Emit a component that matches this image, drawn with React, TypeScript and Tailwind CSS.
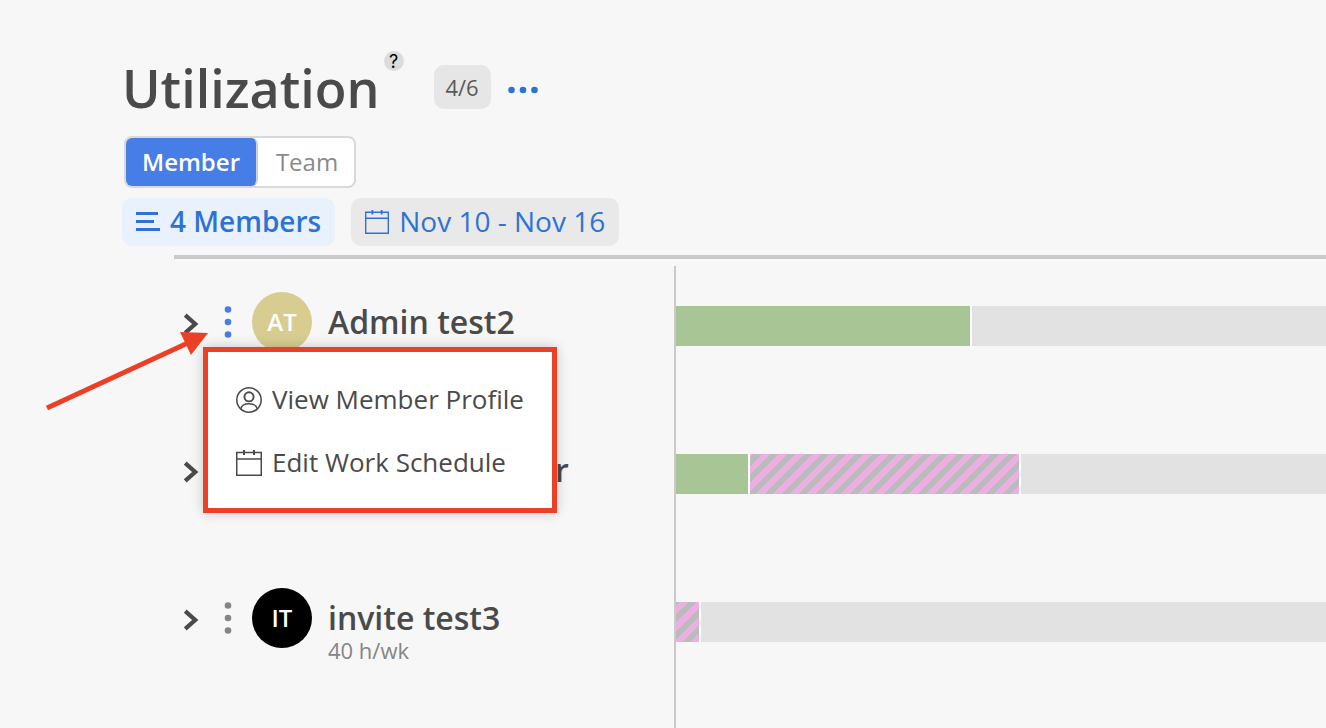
type Segment = { kind: "booked" | "timeOff"; amount: number };

type Member = {
  name: string;
  initials: string;
  avatar: string;
  capacity: string;
  segments: Segment[];
  menuOpen?: boolean;
};

const TRACK_TOTAL = 650;

const members: Member[] = [
  {
    name: "Admin test2",
    initials: "AT",
    avatar: "bg-[#d8cd91]",
    capacity: "40 h/wk",
    segments: [{ kind: "booked", amount: 296 }],
    menuOpen: true,
  },
  {
    name: "Admin member",
    initials: "AM",
    avatar: "bg-[#7aa5d8]",
    capacity: "40 h/wk",
    segments: [
      { kind: "booked", amount: 74 },
      { kind: "timeOff", amount: 271 },
    ],
  },
  {
    name: "invite test3",
    initials: "IT",
    avatar: "bg-black",
    capacity: "40 h/wk",
    segments: [{ kind: "timeOff", amount: 25 }],
  },
];

export default function App() {
  return (
    <main className="flex min-h-screen flex-col overflow-x-hidden bg-[#f7f7f7] font-['Open_Sans',sans-serif] text-[#4a4a4a]">
      <header className="px-[122px] pt-[51px]">
        <div className="flex h-[75px] items-start">
          <h1 className="text-[52px] leading-[74px] font-semibold">Utilization</h1>
          <button
            aria-label="Help"
            className="ml-1 flex size-5 items-center justify-center rounded-full bg-[#dcdcdc] pt-0.5 font-['Inter',sans-serif] text-[18px] leading-5 text-black"
          >
            ?
          </button>
          <span className="mt-3.5 ml-[30px] flex h-11 w-[57px] items-center justify-center rounded-[10px] bg-[#e6e6e6] text-[22px] text-[#5a5a5a]">
            4/6
          </span>
          <button aria-label="More options" className="mt-[34px] ml-4 text-[#2f72d6]">
            <svg width="32" height="10" viewBox="0 0 32 10" fill="currentColor">
              <circle cx="4.5" cy="5" r="3.3" />
              <circle cx="16" cy="5" r="3.3" />
              <circle cx="27.5" cy="5" r="3.3" />
            </svg>
          </button>
        </div>

        <div className="mt-2.5 ml-0.5 flex h-[52px] w-[232px] rounded-lg border-2 border-[#d9d9d9] bg-white text-2xl">
          <button className="w-[132px] rounded-md border-r-2 border-[#d0d0d0] bg-[#467de6] font-semibold text-white">
            Member
          </button>
          <button className="flex-1 pl-0.5 text-[#8a8a8a]">Team</button>
        </div>

        <div className="mt-2.5 flex gap-4 text-[28px] text-[#2f72d6]">
          <button className="flex h-12 items-center gap-2.5 rounded-[10px] bg-[#e9f2fc] px-3.5 pb-0.5 font-semibold">
            <svg width="24" height="20" viewBox="0 0 24 20" fill="currentColor">
              <path d="M0 1h22v3H0zM0 9h18v3H0zM0 17h24v3H0z" />
            </svg>
            4 Members
          </button>
          <button className="flex h-12 items-center gap-2.5 rounded-[10px] bg-[#e9e9e9] px-3.5 pb-0.5">
            <CalendarIcon className="mt-0.5 size-6" />
            Nov 10 - Nov 16
          </button>
        </div>
      </header>

      <div className="mt-[9px] ml-[174px] h-1 bg-[#cacaca]" />

      <section className="mt-[7px] flex flex-1">
        <ul className="w-[674px] shrink-0">
          {members.map((member) => (
            <MemberRow key={member.name} member={member} />
          ))}
        </ul>
        <div className="flex-1 border-l-2 border-[#cacaca]">
          {members.map((member) => (
            <div key={member.name} className="h-[148px] pt-10">
              <UtilizationBar segments={member.segments} />
            </div>
          ))}
        </div>
      </section>
    </main>
  );
}

function MemberRow({ member }: { member: Member }) {
  return (
    <li className="relative flex h-[148px] items-start pt-[26px] pl-[183px]">
      <button aria-label={`Expand ${member.name}`} className="mt-[21px]">
        <svg width="16" height="22" viewBox="0 0 16 22" fill="none" stroke="currentColor" strokeWidth="4.2">
          <path d="M2.2 2.2 12.2 11l-10 8.8" />
        </svg>
      </button>
      <button
        aria-label={`Options for ${member.name}`}
        className={member.menuOpen ? "mt-3 ml-6 text-[#467de6]" : "mt-3 ml-6 text-[#858585]"}
      >
        <svg width="10" height="36" viewBox="0 0 10 36" fill="currentColor">
          <circle cx="5" cy="5.5" r="3.3" />
          <circle cx="5" cy="18" r="3.3" />
          <circle cx="5" cy="30.5" r="3.3" />
        </svg>
      </button>
      <span
        className={`ml-[19px] flex size-[60px] items-center justify-center rounded-full text-2xl font-semibold text-white ${member.avatar}`}
      >
        {member.initials}
      </span>
      <div className="ml-4 pt-2.5 whitespace-nowrap">
        <h2 className="text-[32px] leading-10 font-semibold">{member.name}</h2>
        <p className="text-[22px] leading-6 text-[#858585]">{member.capacity}</p>
      </div>
      {member.menuOpen && (
        <>
          <MemberMenu />
          <Arrow />
        </>
      )}
    </li>
  );
}

function MemberMenu() {
  return (
    <div className="absolute top-[81px] left-[203px] z-10 flex h-[166px] w-[354px] flex-col justify-center gap-[23px] border-[5px] border-[#ec4026] bg-white pl-7 text-[26px] leading-10 shadow-[0_0_12px_rgba(0,0,0,0.2)]">
      <button className="flex items-center gap-2.5 whitespace-nowrap">
        <ProfileIcon />
        View Member Profile
      </button>
      <button className="flex items-center gap-2.5 whitespace-nowrap">
        <CalendarIcon className="mt-0.5 size-[26px]" />
        Edit Work Schedule
      </button>
    </div>
  );
}

function UtilizationBar({ segments }: { segments: Segment[] }) {
  return (
    <div className="flex h-10 bg-[#e2e2e2]">
      {segments.map((segment) => (
        <div
          key={segment.kind}
          className={
            segment.kind === "booked"
              ? "border-r-2 border-white bg-[#a8c595]"
              : "border-r-2 border-white bg-[repeating-linear-gradient(-45deg,#ebb0e1_0_6px,#babcbc_6px_12px)]"
          }
          style={{ width: `${(segment.amount / TRACK_TOTAL) * 100}%` }}
        />
      ))}
    </div>
  );
}

function Arrow() {
  return (
    <svg
      className="pointer-events-none absolute top-[60px] left-[40px] z-20"
      width="172"
      height="90"
      viewBox="0 0 172 90"
      fill="#ec4026"
    >
      <path d="M7 82 150 16" stroke="#ec4026" strokeWidth="5" />
      <path d="M140 6 168 7 151 29z" />
    </svg>
  );
}

function CalendarIcon({ className }: { className: string }) {
  return (
    <svg className={className} viewBox="0 0 26 26" fill="none" stroke="currentColor" strokeWidth="1.5">
      <path d="M.75 2.5h24.5v22.75H.75zM.75 9h24.5" />
      <path d="M8 0v5M18 0v5" strokeWidth="2" />
    </svg>
  );
}

function ProfileIcon() {
  return (
    <svg className="mt-0.5 size-[26px]" viewBox="0 0 26 26" fill="none" stroke="currentColor" strokeWidth="1.5">
      <circle cx="13" cy="13" r="12.2" />
      <circle cx="13" cy="9.8" r="4.6" strokeWidth="1.9" />
      <path d="M4.8 21.8c.8-3.6 3.6-5 8.2-5s7.4 1.4 8.2 5" />
    </svg>
  );
}
